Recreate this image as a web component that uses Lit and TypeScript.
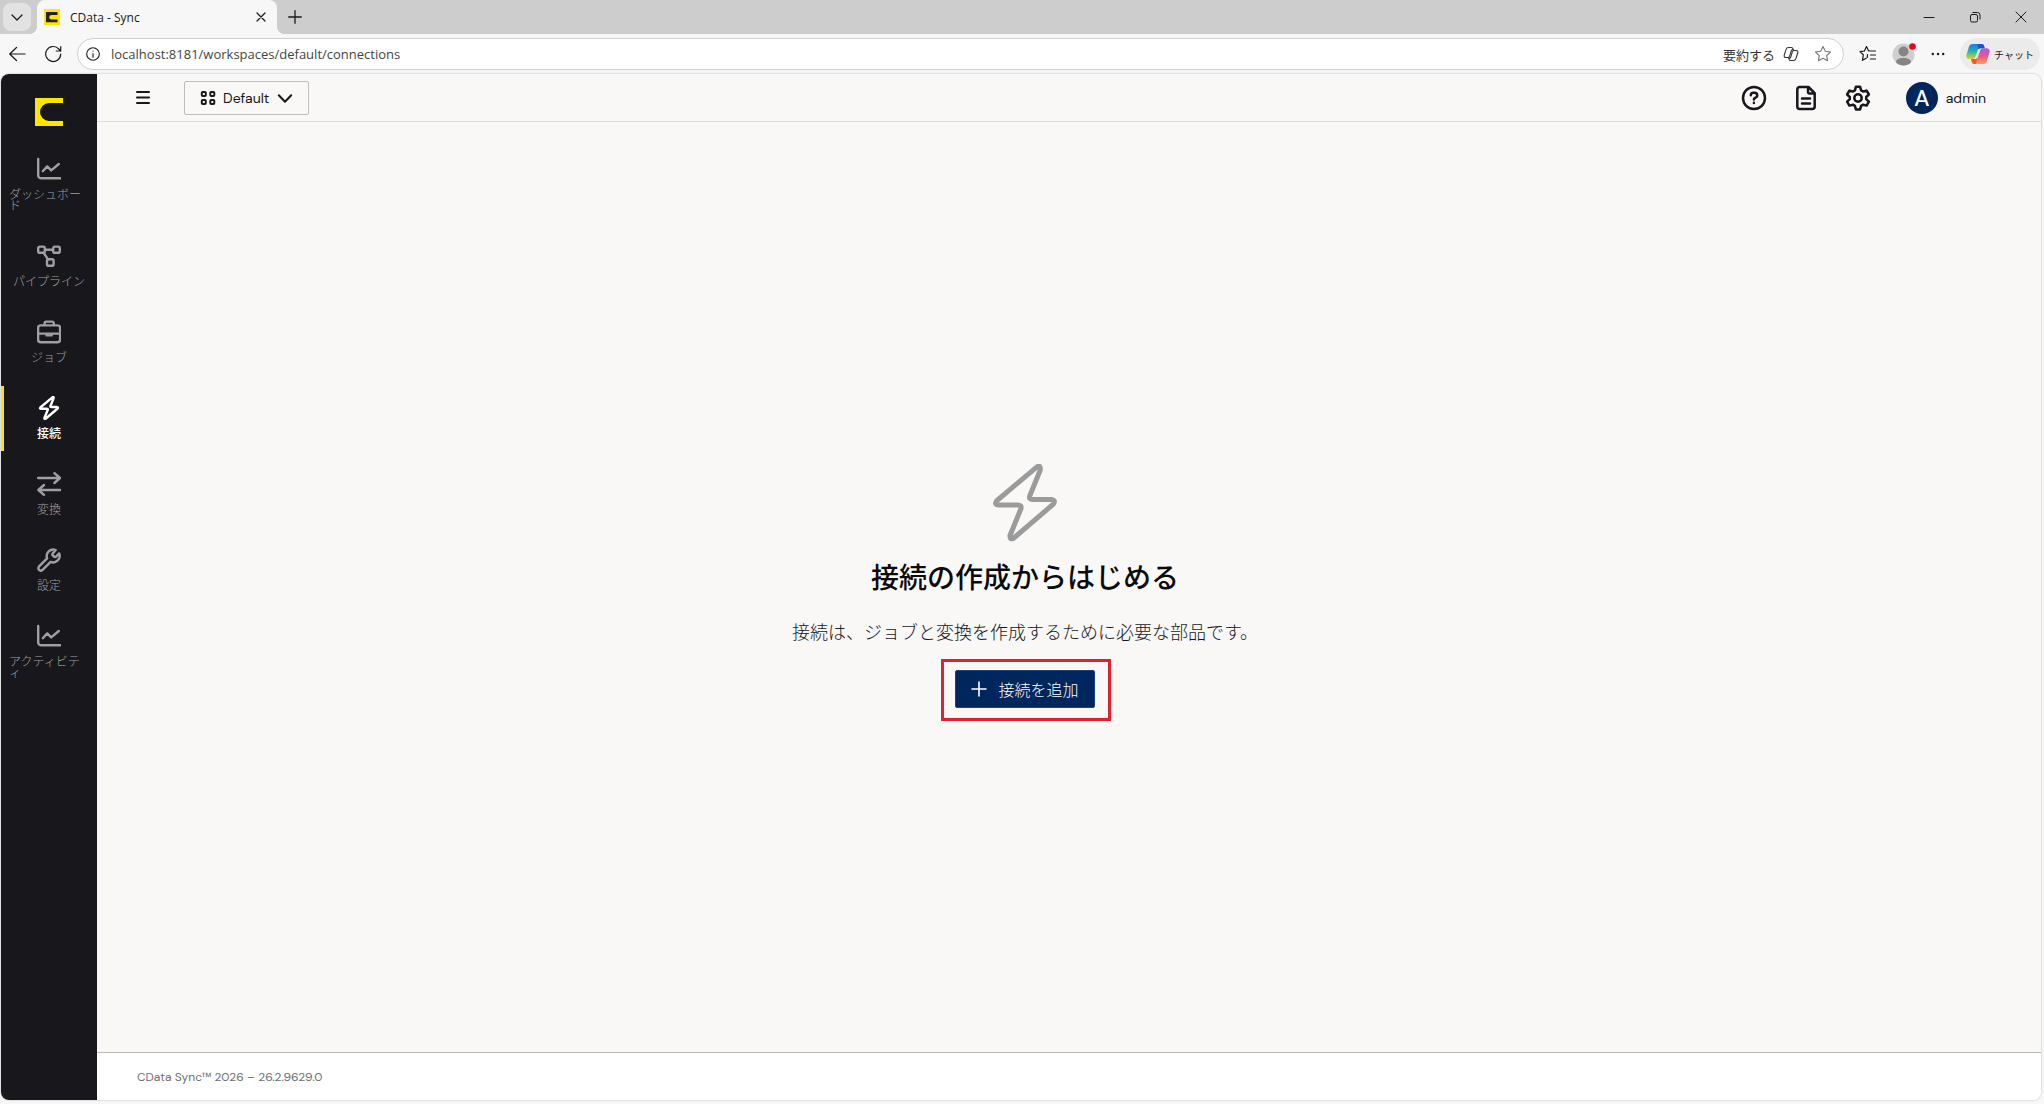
import { LitElement, html, css, svg, nothing } from "lit";
import { customElement, property } from "lit/decorators.js";
import { classMap } from "lit/directives/class-map.js";

const boltPath = svg`<path d="M44 2.8 L3.5 37 Q1 41 5.5 41 H24.5 Q29 41 28 44.5 L17 71.5 Q16.6 76.5 20.8 74 L60.5 40 Q63 36 58.5 35.5 H39.5 Q35.5 35.5 36.8 31.8 L47.3 6 Q47.8 0.5 44 2.8Z"/>`;

const chart = svg`<path d="M1.2 2v16.6a2.7 2.7 0 0 0 2.7 2.7H23.5"/><path d="M5.8 14.2l4.4-4.8 4 4L21.8 7"/>`;

const navIcons: Record<string, unknown> = {
  chart,
  pipeline: svg`<rect x="1.2" y="2.6" width="6.6" height="6.2" rx="1.6"/><rect x="16.2" y="2.6" width="6.6" height="6.2" rx="1.6"/><rect x="10" y="15.2" width="6.6" height="6.6" rx="1.6"/><path d="M8 5.7h8M6.8 9l4.2 6.4"/>`,
  briefcase: svg`<rect x="1.1" y="5.4" width="22" height="16.8" rx="2.6"/><path d="M7.6 5V3.2A1.6 1.6 0 0 1 9.2 1.6h6a1.6 1.6 0 0 1 1.6 1.6V5M1.1 13.6h22"/><path d="M9.6 14.4v1h5v-1" />`,
  arrows: svg`<path d="M1.2 6h22M17.4 1.2L23 6l-5.6 5M23.4 18h-22M7 13l-5.6 5L7 22.8"/>`,
  wrench: svg`<path d="M15.6 5.6a1.1 1.1 0 0 0 0 1.6l1.6 1.6a1.1 1.1 0 0 0 1.6 0l3.4-3.4a6.6 6.6 0 0 1-8.6 8.5l-8 8a2.4 2.4 0 0 1-3.5-3.5l8-8a6.6 6.6 0 0 1 8.6-8.4z"/>`,
};

const copilotLogo = html`<svg width="24" height="22" viewBox="0 0 24 22" aria-hidden="true">
  <defs>
    <linearGradient id="cpa" x1="0" y1="0" x2="0" y2="1"><stop offset="0" stop-color="#1b7ae0"/><stop offset=".5" stop-color="#27b3b8"/><stop offset=".8" stop-color="#8fd04a"/><stop offset="1" stop-color="#f1c62c"/></linearGradient>
    <linearGradient id="cpb" x1="0" y1="0" x2="0" y2="1"><stop offset="0" stop-color="#a45be8"/><stop offset=".5" stop-color="#e8588c"/><stop offset="1" stop-color="#ff9d4d"/></linearGradient>
  </defs>
  <path d="M15.5 1c1.300 0 2.200.8 2.600 2l.6 2.200h-4.200c-1.600 0-2.400.8-2.900 2.300L9.300 14c-.5 1.500-1.300 2-2.600 2H3.500C1 16-.2 14.300.5 11.800l2.300-7.600C3.500 2 4.800 1 7 1z" fill="url(#cpa)"/>
  <path d="M11.500 1h4c1.300 0 2.200.8 2.600 2l.6 2.200h-4.200c-1 0-1.700.3-2.200 1z" fill="#1f4fd0"/>
  <path d="M8.500 21c-1.300 0-2.200-.8-2.600-2l-.7-3h3.900c1.600 0 2.400-.8 2.900-2.300l2.300-6.500c.5-1.500 1.300-2 2.600-2h3.600c2.500 0 3.700 1.700 3 4.200l-2.300 7.600C20.500 20 19.200 21 17 21z" fill="url(#cpb)"/>
  <path d="M5.200 16h3.900c1 0 1.700-.3 2.200-1l-1.500 6H8.500c-1.300 0-2.200-.8-2.600-2z" fill="#f4562f"/>
</svg>`;

@customElement("browser-chrome")
export class BrowserChrome extends LitElement {
  static styles = css`
    :host { display: block; font-family: "Open Sans", "Noto Sans CJK JP", sans-serif; color: #1a1a1a; background: #f7f7f7; }
    button { border: 0; background: none; padding: 0; margin: 0; font: inherit; color: inherit; display: flex; align-items: center; justify-content: center; flex: none; }
    svg { display: block; flex: none; }
    .line { fill: none; stroke: currentColor; stroke-linecap: round; stroke-linejoin: round; }
    .tabs { display: flex; align-items: stretch; height: 34px; background: #cdcdcd; padding-left: 3px; }
    .tab-menu { width: 28px; height: 28px; margin: 3px 6px 3px 0; border-radius: 8px; background: #e2e2e2; }
    .tab { display: flex; align-items: center; width: 240px; box-sizing: border-box; padding: 0 10px 0 7px; background: #f7f7f7; border-radius: 8px 8px 0 0; position: relative; gap: 10px; font-size: 12px; }
    .tab::before, .tab::after { content: ""; position: absolute; bottom: 0; width: 8px; height: 8px; }
    .tab::before { left: -8px; background: radial-gradient(circle at 0 0, transparent 8px, #f7f7f7 8px); }
    .tab::after { right: -8px; background: radial-gradient(circle at 100% 0, transparent 8px, #f7f7f7 8px); }
    .tab-title { flex: 1; }
    .new-tab { width: 36px; }
    .window { display: flex; margin-left: auto; }
    .window button { width: 46px; }
    .toolbar { display: flex; align-items: center; height: 40px; padding: 0 4px 0 0; }
    .nav { width: 36px; height: 32px; }
    .address { display: flex; align-items: center; flex: 1; height: 32px; box-sizing: border-box; border: 1px solid #cfcfcf; border-radius: 16px; background: #fff; padding: 0 0 0 8px; margin-left: 5px; }
    .address input { flex: 1; min-width: 0; border: 0; outline: 0; background: none; padding: 0 0 0 11px; font: inherit; font-size: 13px; color: #444; }
    .address .summary { font-size: 13px; gap: 8px; color: #333; }
    .address .star { width: 40px; margin-left: 4px; color: #777; }
    .tools { display: flex; align-items: center; }
    .tools .fav { width: 48px; }
    .tools .person { width: 24px; }
    .tools .more { width: 44px; }
    .chat { height: 32px; padding: 0 6px; border-radius: 16px; background: #ebebeb; gap: 4px; font-size: 10px; }
  `;

  render() {
    return html`
      <div class="tabs">
        <button class="tab-menu" aria-label="Tab menu"><svg class="line" width="14" height="14" viewBox="0 0 14 14" stroke-width="1.3"><path d="M2 5l5 5 5-5"/></svg></button>
        <div class="tab">
          <svg width="16" height="16" viewBox="0 0 16 16"><rect width="16" height="16" fill="#ffe500"/><path d="M2 3h11.500v3H7.500a2 2 0 0 0 0 4.600h6v2.700H2z" fill="#222"/></svg>
          <span class="tab-title">CData - Sync</span>
          <button aria-label="Close tab"><svg class="line" width="12" height="12" viewBox="0 0 12 12" stroke-width="1.200"><path d="M2 2l8 8M10 2l-8 8"/></svg></button>
        </div>
        <button class="new-tab" aria-label="New tab"><svg class="line" width="14" height="14" viewBox="0 0 14 14" stroke-width="1.300"><path d="M7 .7v12.600M.7 7h12.600"/></svg></button>
        <div class="window">
          <button aria-label="Minimize"><svg class="line" width="12" height="12" viewBox="0 0 12 12"><path d="M1 6.500h10"/></svg></button>
          <button aria-label="Restore"><svg class="line" width="12" height="12" viewBox="0 0 12 12"><rect x="1.500" y="3.500" width="7" height="7.500" rx="1.500"/><path d="M4 1.500h4.500a2.500 2.500 0 0 1 2.500 2.500V8"/></svg></button>
          <button aria-label="Close"><svg class="line" width="12" height="12" viewBox="0 0 12 12"><path d="M1 1l10 10M11 1L1 11"/></svg></button>
        </div>
      </div>
      <div class="toolbar">
        <button class="nav" aria-label="Back"><svg class="line" width="18" height="16" viewBox="0 0 18 16" stroke-width="1.200"><path d="M16 8H.7M7.500 1.500L.7 8l6.800 6.500"/></svg></button>
        <button class="nav" aria-label="Reload"><svg class="line" width="18" height="18" viewBox="0 0 18 18" stroke-width="1.200"><path d="M15.700 9A7.500 7.500 0 1 1 13.800 4L15.700 6M15.700 1.500V6H11.200"/></svg></button>
        <div class="address">
          <svg class="line" width="14" height="14" viewBox="0 0 14 14" stroke-width="1.100"><circle cx="7" cy="7" r="6.300"/><path d="M7 6.500v3.700M7 4v.1"/></svg>
          <input aria-label="Address" value="localhost:8181/workspaces/default/connections" />
          <button class="summary">要約する
            <svg class="line" width="16" height="16" viewBox="0 0 16 16" stroke-width="1.100"><path d="M10.500 4.300L10 2.800C9.700 2 9.200 1.500 8.300 1.500H5.500c-1.300 0-2 .6-2.400 1.800L1.300 9c-.5 1.600.2 2.500 1.700 2.500h1.800c1 0 1.500-.5 1.800-1.400l1.800-5.300c.3-.9.900-1.400 1.800-1.400"/><path d="M5.500 11.500L6 13.200c.3.800.8 1.300 1.700 1.300h2.800c1.300 0 2-.6 2.400-1.800L14.700 7c.5-1.600-.2-2.500-1.700-2.500h-1.800c-1 0-1.500.5-1.800 1.400l-1.800 5.300c-.3.900-.9 1.400-1.800 1.400"/></svg>
          </button>
          <button class="star" aria-label="Add favorite"><svg class="line" width="18" height="18" viewBox="0 0 18 18" stroke-width="1.100"><path d="M9 1.500l2.300 4.800 5.200.7-3.800 3.600.9 5.200L9 13.300l-4.600 2.500.9-5.200L1.500 7l5.200-.7z"/></svg></button>
        </div>
        <div class="tools">
          <button class="fav" aria-label="Favorites"><svg class="line" width="18" height="18" viewBox="0 0 18 18" stroke-width="1.200"><path d="M11 6L9.500 5.700 7.500 1.500 5.400 6 1 6.600l3.300 3.200-.8 5.500 3.700-2.100M11.500 6h5M11.500 10h5M11.500 14h5M8.500 9.500l-.2 3"/></svg></button>
          <button class="person" aria-label="Profile"><svg width="24" height="24" viewBox="0 0 24 24"><circle cx="11.500" cy="12.500" r="11" fill="#cfcfcd"/><circle cx="11.500" cy="9.500" r="5" fill="#858585"/><path d="M4 20.500c0-3 2.500-4.500 7.500-4.500s7.500 1.500 7.500 4.500c-2 2-4.500 3-7.500 3s-5.500-1-7.500-3z" fill="#858585"/><circle cx="20.500" cy="4.500" r="3.300" fill="#e00b1c"/></svg></button>
          <button class="more" aria-label="More"><svg width="14" height="4" viewBox="0 0 14 4"><g fill="currentColor"><circle cx="1.800" cy="2" r="1.200"/><circle cx="7" cy="2" r="1.200"/><circle cx="12.200" cy="2" r="1.200"/></g></svg></button>
          <button class="chat">${copilotLogo}<span>チャット</span></button>
        </div>
      </div>
    `;
  }
}

@customElement("side-nav")
export class SideNav extends LitElement {
  static styles = css`
    :host { display: block; background: #17171c; color: #a0a0a2; font-family: "Noto Sans CJK JP", sans-serif; }
    .nav { display: flex; flex-direction: column; padding-top: 24px; }
    .logo { display: block; width: 28px; margin: 0 auto 21px; }
    svg { display: block; flex: none; }
    .list { list-style: none; margin: 0; padding: 0; display: flex; flex-direction: column; gap: 11px; }
    .item { display: flex; flex-direction: column; align-items: center; gap: 7px; padding: 10px 8px 13px; color: inherit; text-decoration: none; font-size: 12px; line-height: 11px; font-weight: 300; }
    .icon { fill: none; stroke: currentColor; stroke-width: 2.4; stroke-linecap: round; stroke-linejoin: round; }
    .bolt { stroke-width: 8; }
    .active { color: #fff; font-weight: 500; box-shadow: inset 3px 0 #fde50b; }
  `;

  private items = [
    { icon: "chart", label: "ダッシュボード" },
    { icon: "pipeline", label: "パイプライン" },
    { icon: "briefcase", label: "ジョブ" },
    { icon: "bolt", label: "接続", active: true },
    { icon: "arrows", label: "変換" },
    { icon: "wrench", label: "設定" },
    { icon: "chart", label: "アクティビティ" },
  ];

  render() {
    return html`<nav class="nav">
      <a class="logo" href="#" aria-label="CData"><svg width="28" height="28" viewBox="0 0 28 28"><path d="M0 0h28v5H14a9 9 0 0 0 0 18h14v5H0z" fill="#ffe500"/></svg></a>
      <ul class="list">
        ${this.items.map((i) => html`<li>
          <a class=${classMap({ item: true, active: !!i.active })} href="#" aria-current=${i.active ? "page" : nothing}>
            ${i.icon === "bolt"
              ? html`<svg class="icon bolt" width="24" height="24" viewBox="-3 -1 70 79">${boltPath}</svg>`
              : html`<svg class="icon" width="24" height="24" viewBox="0 0 24 24">${navIcons[i.icon]}</svg>`}
            <span>${i.label}</span>
          </a></li>`)}
      </ul>
    </nav>`;
  }
}

@customElement("app-header")
export class AppHeader extends LitElement {
  static styles = css`
    :host { display: flex; align-items: center; height: 48px; box-sizing: border-box; border-bottom: 1px solid #dcdcdc; padding: 0 55px 0 38px; font-family: "DM Sans", Roboto, sans-serif; color: #17171c; }
    button { border: 0; background: none; padding: 0; margin: 0; font: inherit; color: inherit; display: flex; align-items: center; justify-content: center; }
    svg { display: block; flex: none; pointer-events: none; }
    .line { fill: none; stroke: currentColor; stroke-width: 2; stroke-linecap: round; stroke-linejoin: round; }
    .workspace { display: flex; align-items: center; gap: 7px; height: 34px; box-sizing: border-box; border: 1px solid #bdbdbd; border-radius: 2px; padding: 0 15px; margin-left: 33px; }
    .workspace select { appearance: none; border: 0; outline: 0; background: none; padding: 0; font: inherit; font-size: 14px; font-weight: 400; color: inherit; }
    .actions { display: flex; align-items: center; gap: 26px; margin-left: auto; }
    .actions .line { stroke-width: 2.5; }
    .user { gap: 8px; margin-left: 9px; font-size: 14px; font-weight: 400; }
    .avatar { display: grid; place-items: center; width: 32px; height: 32px; border-radius: 50%; background: #00265e; color: #fff; font-size: 23px; font-weight: 500; }
  `;

  render() {
    return html`
      <button aria-label="Menu"><svg class="line" width="16" height="16" viewBox="0 0 16 16"><path d="M2 2h12M2 7.500h12M2 13h12"/></svg></button>
      <label class="workspace">
        <svg class="line" width="16" height="16" viewBox="0 0 16 16"><rect x="1.800" y="2" width="4" height="4" rx="1"/><rect x="10.300" y="2" width="4" height="4" rx="1"/><rect x="1.800" y="10" width="4" height="4" rx="1"/><rect x="10.300" y="10" width="4" height="4" rx="1"/></svg>
        <select aria-label="Workspace"><option>Default</option></select>
        <svg class="line" width="16" height="16" viewBox="0 0 16 16"><path d="M1.800 5.200L8 11.700l6.200-6.500"/></svg>
      </label>
      <div class="actions">
        <button aria-label="Help"><svg class="line" width="26" height="26" viewBox="0 0 26 26"><circle cx="13" cy="13" r="11"/><path d="M9.800 10.300a2.600 2.600 0 0 1 2.600-2.500h1.300a2.500 2.500 0 0 1 1.200 4.700l-1.200.7a1.500 1.500 0 0 0-.8 1.300M12.900 17.700v.2"/></svg></button>
        <button aria-label="Documentation"><svg class="line" width="26" height="26" viewBox="0 0 26 26"><path d="M15.500 2H6.800a2.500 2.500 0 0 0-2.500 2.500v17a2.500 2.500 0 0 0 2.500 2.500h12.400a2.500 2.500 0 0 0 2.500-2.500V8.200zM15 2.500v4.200A1.800 1.800 0 0 0 16.800 8.500h4.500M9 13.500h8M9 18.500h8"/></svg></button>
        <button aria-label="Settings"><svg class="line" width="26" height="26" viewBox="0 0 26 26"><path d="M10.900 1.800h4.200l1 3.600 1.900 1.100 3.600-.9 2.300 3.900-2.700 2.500v2.200l2.700 2.500-2.300 3.900-3.600-.9-1.900 1.100-1 3.600h-4.200l-1-3.600L8 19.700l-3.600.9-2.300-3.900 2.700-2.500V12L2.100 9.500l2.300-3.900 3.600.9 1.900-1.100z"/><circle cx="13" cy="13" r="3.700"/></svg></button>
        <button class="user"><span class="avatar">A</span><span>admin</span></button>
      </div>
    `;
  }
}

@customElement("app-root")
export class AppRoot extends LitElement {
  @property() version = "26.2.9629.0";

  static styles = css`
    :host { display: flex; flex-direction: column; min-height: 100vh; background: #f7f7f7; }
    .frame { flex: 1; display: grid; grid-template-columns: 96px 1fr; margin: 0 3px 4px 1px; border-radius: 8px; overflow: hidden; background: #f9f8f7; box-shadow: 0 0 1px 1px #dedede; }
    .page { display: flex; flex-direction: column; min-width: 0; }
    .main { flex: 1; display: flex; flex-direction: column; align-items: center; justify-content: center; padding: 0 88px 2px 0; font-family: "Noto Sans CJK JP", sans-serif; color: #17171c; }
    .bolt { display: block; fill: none; stroke: #9b9b9b; stroke-width: 5; stroke-linejoin: round; }
    .title { margin: 13px 0 0; font-size: 28px; line-height: 42px; font-weight: 500; color: #0b0b0c; }
    .text { margin: 16px 0 21px; font-size: 18px; line-height: 36px; font-weight: 300; }
    .cta { position: relative; }
    .cta::after { content: ""; position: absolute; inset: -11px -16px -13px -14px; border: 3px solid #dc2430; pointer-events: none; }
    .add { display: flex; align-items: center; gap: 11px; height: 38px; padding: 0 15px; border: 1px solid #1d4478; border-radius: 2px; background: #00265e; color: #fff; font: inherit; font-size: 16px; font-weight: 300; }
    .footer { display: flex; align-items: center; height: 47px; padding: 0 40px; border-top: 1px solid #b9bab8; background: #fff; color: #6f6f72; font-family: "DM Sans", Roboto, sans-serif; font-size: 12px; }
  `;

  render() {
    return html`
      <browser-chrome></browser-chrome>
      <div class="frame">
        <side-nav></side-nav>
        <div class="page">
          <app-header></app-header>
          <main class="main">
            <svg class="bolt" width="64" height="78" viewBox="0 0 64 78" aria-hidden="true">${boltPath}</svg>
            <h1 class="title">接続の作成からはじめる</h1>
            <p class="text">接続は、ジョブと変換を作成するために必要な部品です。</p>
            <div class="cta">
              <button class="add">
                <svg width="16" height="16" viewBox="0 0 16 16" fill="none" stroke="#fff" stroke-width="1.600" stroke-linecap="round"><path d="M8 1v14M1 8h14"/></svg>
                接続を追加
              </button>
            </div>
          </main>
          <footer class="footer">CData Sync™ 2026 – ${this.version}</footer>
        </div>
      </div>
    `;
  }
}
